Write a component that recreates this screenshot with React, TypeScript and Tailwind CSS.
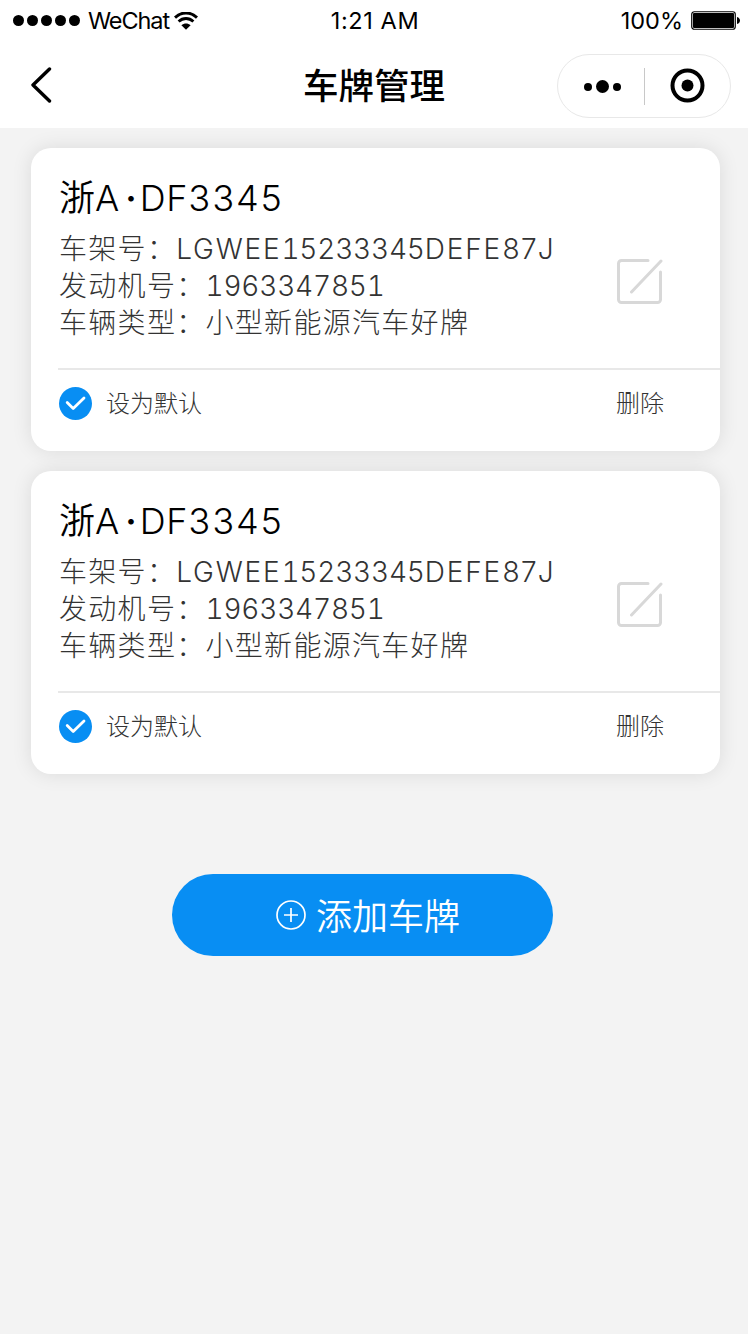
type Plate = {
  id: number;
  region: string;
  letter: string;
  number: string;
  vin: string;
  engine: string;
  type: string;
  isDefault: boolean;
};

const plates: Plate[] = [
  { id: 1, region: "浙", letter: "A", number: "DF3345", vin: "LGWEE15233345DEFE87J", engine: "1963347851", type: "小型新能源汽车好牌", isDefault: true },
  { id: 2, region: "浙", letter: "A", number: "DF3345", vin: "LGWEE15233345DEFE87J", engine: "1963347851", type: "小型新能源汽车好牌", isDefault: true },
];

function StatusBar() {
  return (
    <div className="relative flex h-10 items-center justify-between pt-px pl-[13px] pr-[9px] text-[23.5px] leading-10">
      <div className="flex items-center">
        <div className="flex gap-[3px]">
          {[0, 1, 2, 3, 4].map((i) => (
            <span key={i} className="size-[11px] rounded-full bg-black" />
          ))}
        </div>
        <span className="ml-2 tracking-[-1.1px]">WeChat</span>
        <svg className="ml-[5px]" width="24" height="18" viewBox="0 0 24 18" fill="none" stroke="#000">
          <path d="M1 5.6C7.2-.6 16.8-.6 23 5.6" strokeWidth="2.9" />
          <path d="M4.6 9.5c4.4-4 10.4-4 14.8 0" strokeWidth="2.9" />
          <path d="M7.4 13.2c2.8-2.4 6.4-2.4 9.200 0L12 17.800z" fill="#000" stroke="none" />
        </svg>
      </div>
      <span className="absolute left-1/2 -translate-x-1/2 tracking-[0.6px] whitespace-nowrap">1:21 AM</span>
      <div className="flex items-center">
        <span>100%</span>
        <svg className="ml-[8px]" width="50" height="19" viewBox="0 0 50 19">
          <rect x=".75" y=".75" width="43.5" height="17.5" rx="2.5" fill="none" stroke="#000" strokeWidth="1.2" />
          <rect x="2" y="2" width="41" height="15" rx="1" />
          <path d="M46 6c4 1 4 6 0 7z" />
        </svg>
      </div>
    </div>
  );
}

function NavBar() {
  return (
    <header className="relative flex h-[88px] items-center justify-between pl-[30px] pr-[19px]">
      <svg className="mt-px" width="22" height="36" viewBox="0 0 22 36" fill="none" stroke="#000" strokeWidth="3.4">
        <path d="M19.500 2 3 18l16.500 16" strokeLinecap="round" strokeLinejoin="round" />
      </svg>
      <h1 className="absolute left-1/2 -translate-x-1/2 pt-[6px] pr-[2px] text-[35.5px] leading-[88px] font-medium whitespace-nowrap">车牌管理</h1>
      <div className="mt-1 flex h-16 w-[174px] items-center rounded-full border border-[#e8e8e8]">
        <svg width="86" height="62" viewBox="0 0 86 62">
          <circle cx="30" cy="32" r="4" />
          <circle cx="44.5" cy="31.5" r="6.5" />
          <circle cx="59" cy="32" r="4" />
        </svg>
        <span className="h-[37px] w-px bg-[#c8c8c8]" />
        <svg width="85" height="62" viewBox="0 0 85 62">
          <circle cx="42.5" cy="30.5" r="15" fill="none" stroke="#000" strokeWidth="4" />
          <circle cx="42.5" cy="30.5" r="6" />
        </svg>
      </div>
    </header>
  );
}

// letters are set a little wider than the digits
function Code({ value }: { value: string }) {
  const runs = value.match(/\d+|\D+/g) ?? [];
  return (
    <span className="tabular-nums">
      {runs.map((run, i) => (
        <span key={i} className={/\d/.test(run) ? "tracking-[-0.2px]" : "tracking-[1.8px]"}>
          {run}
        </span>
      ))}
    </span>
  );
}

function InfoRow({ label, children }: { label: string; children: React.ReactNode }) {
  return (
    <div className="flex h-[37px] text-[28px] leading-[37px] font-light whitespace-nowrap text-[#333]">
      <span className="tracking-[1.3px]">{label}：</span>
      {children}
    </div>
  );
}

function PlateCard({ item }: { item: Plate }) {
  return (
    <section className="h-[303px] rounded-[20px] bg-white pl-[27px] shadow-[0_0_20px_rgba(0,0,0,0.1)]">
      <div className="flex h-[220px] justify-between pr-[57px]">
        <div className="pt-[26px] pl-px">
          <h2 className="mb-[9px] flex h-12 text-[36px] leading-[48px] font-[350] whitespace-nowrap">
            <span>{item.region}</span>
            <span>{item.letter}</span>
            <span className="mr-[3px] ml-[6px] font-semibold">·</span>
            <span className="tracking-[0.6px] tabular-nums">{item.number}</span>
          </h2>
          <InfoRow label="车架号">
            <Code value={item.vin} />
          </InfoRow>
          <InfoRow label="发动机号">
            <Code value={item.engine} />
          </InfoRow>
          <InfoRow label="车辆类型">
            <span className="tracking-[1.3px]">{item.type}</span>
          </InfoRow>
        </div>
        <button className="mt-[111px] size-[46px]">
          <svg width="46" height="46" viewBox="0 0 46 46" fill="none" stroke="#d8d8d8" strokeWidth="3" strokeLinecap="round">
            <path d="M31 1.5H4.5a3 3 0 0 0-3 3v36a3 3 0 0 0 3 3h36a3 3 0 0 0 3-3V13" />
            <path d="M14.5 33 44 2" />
          </svg>
        </button>
      </div>
      <div className="flex h-[69px] items-center justify-between border-t-2 border-[#e8e8e8] pr-[56px] pl-px text-[24px] font-light text-[#333]">
        <label className="flex items-center gap-[14px]">
          {item.isDefault && (
            <svg width="33" height="33" viewBox="0 0 33 33" fill="none">
              <circle cx="16.5" cy="16.5" r="16.5" fill="#088ef3" />
              <path d="m8.2 15.5 6 6L25 11" stroke="#fff" strokeWidth="2.8" strokeLinecap="round" strokeLinejoin="round" />
            </svg>
          )}
          <span className="pt-px">设为默认</span>
        </label>
        <button className="pt-px">删除</button>
      </div>
    </section>
  );
}

export default function App() {
  return (
    <div className="h-[1334px] w-[750px] overflow-hidden bg-white font-[Inter,'Noto_Sans_CJK_SC',sans-serif] text-black">
      <StatusBar />
      <NavBar />
      <main className="h-[1206px] w-[748px] overflow-hidden bg-[#f3f3f3] pt-5 pr-7 pl-[31px]">
        <div className="flex flex-col gap-5">
          {plates.map((p) => (
            <PlateCard key={p.id} item={p} />
          ))}
        </div>
        <button className="mt-[100px] ml-[141px] flex h-[82px] w-[381px] items-center rounded-full bg-[#088ef3] pl-[103px] text-[36px] font-[350] whitespace-nowrap text-white">
          <svg className="mr-[9px]" width="32" height="32" viewBox="0 0 32 32" fill="none" stroke="#fff" strokeWidth="1.7">
            <circle cx="16" cy="16" r="14" />
            <path d="M16 9v14M9 16h14" />
          </svg>
          <span className="pt-[3px]">添加车牌</span>
        </button>
      </main>
    </div>
  );
}
